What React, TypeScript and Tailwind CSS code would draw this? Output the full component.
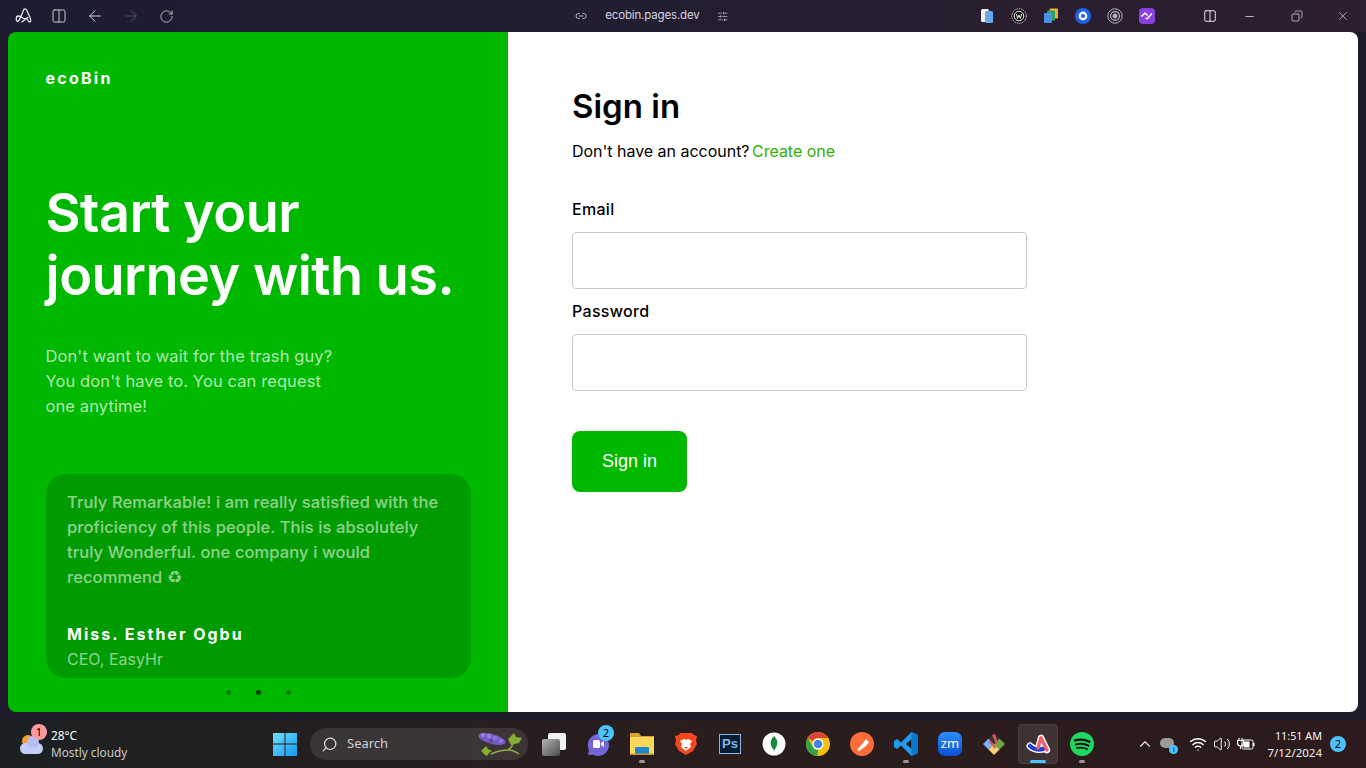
import { ArrowLeft, ArrowRight, RotateCw, Link2, SlidersHorizontal, Minus, Copy, X, Columns2, ChevronUp, Wifi, Volume2, Search } from "lucide-react";

const ArcLogo = ({ size = 18 }: { size?: number }) => (
  <svg width={size} height={size} viewBox="0 0 24 24" fill="none">
    <path d="M2 13c2-2 4-1 6 0l3 2c2 1 4 1 6-1M12 3 8 12c-1 3-2 6-4 7-3 0-3-4-1-6M12 3c2-1 3 0 4 2l4 9c1 3 2 5 0 6-2 0-3-2-4-4M9 20c2-1 3-2 5-4" stroke="#e6e6f2" strokeWidth="1.7" strokeLinecap="round" strokeLinejoin="round" />
  </svg>
);

function TopBar() {
  return (
    <div className="h-8 shrink-0 flex items-center bg-gradient-to-r from-[#1c1c30] via-[#231d30] to-[#2d1f30] text-[#d5d5e2]">
      <div className="w-[575px] shrink-0 flex items-center pl-[15px] gap-[18px]">
        <ArcLogo />
        <Columns2 size={16} strokeWidth={1.4} />
        <ArrowLeft size={18} strokeWidth={1.3} className="ml-[1px]" />
        <ArrowRight size={18} strokeWidth={1.3} className="text-[#55556a]" />
        <RotateCw size={15} strokeWidth={1.3} className="ml-[1px]" />
      </div>
      <div className="w-[153px] shrink-0 flex items-center">
        <Link2 size={14} strokeWidth={1.5} />
        <span className="ml-[18px] mr-[17px] text-[11.5px] font-['Inter',sans-serif] tracking-[-0.15px] whitespace-nowrap">ecobin.pages.dev</span>
        <SlidersHorizontal size={13} strokeWidth={1.4} />
      </div>
      <div className="flex-1 flex items-center pl-[251px] gap-4">
        <svg width="16" height="16" viewBox="0 0 16 16">
          <rect x="2" y="1" width="8" height="13" rx="1.5" fill="#f2f2f4" />
          <rect x="6" y="3" width="8" height="12" rx="1.5" fill="#6aa8ee" />
        </svg>
        <svg width="16" height="16" viewBox="0 0 16 16">
          <circle cx="8" cy="8" r="7.2" fill="#0c0c0c" stroke="#f0f0f0" strokeDasharray="1.4 1" />
          <circle cx="8" cy="8" r="4.8" fill="none" stroke="#f0f0f0" />
          <path d="M5.4 6l1.2 4.4L8 7l1.4 3.4L10.6 6" fill="none" stroke="#f0f0f0" strokeWidth="1" />
        </svg>
        <svg width="16" height="16" viewBox="0 0 16 16">
          <rect x="6.5" y="0.5" width="8.5" height="10" rx="1" fill="#edb22c" />
          <rect x="4" y="2.5" width="8" height="10" rx="1" fill="#2da06a" />
          <rect x="1" y="5" width="8" height="10" rx="1" fill="#4d8fe0" />
        </svg>
        <svg width="16" height="16" viewBox="0 0 16 16">
          <circle cx="8" cy="8" r="8" fill="#1e62e6" />
          <circle cx="8" cy="8" r="4.4" fill="#f4f6ff" />
          <circle cx="8" cy="8" r="2" fill="#1e62e6" />
        </svg>
        <svg width="16" height="16" viewBox="0 0 16 16" fill="none" stroke="#b8b8bc">
          <circle cx="8" cy="8" r="7.2" />
          <circle cx="8" cy="8" r="4.4" strokeWidth="1.2" />
          <circle cx="8" cy="8" r="2" fill="#b8b8bc" />
        </svg>
        <svg width="16" height="16" viewBox="0 0 16 16">
          <rect width="16" height="16" rx="4" fill="#8b3fe0" />
          <path d="M2.500 8.500 6 5l2.500 2.500M6.500 10.500l2 0 4.500-5" fill="none" stroke="#fff" strokeWidth="1.500" />
        </svg>
      </div>
      <div className="flex items-center pr-[16px]">
        <Columns2 size={14} strokeWidth={1.5} className="text-white" />
        <Minus size={13} strokeWidth={1.5} className="ml-[26px]" />
        <Copy size={12} strokeWidth={1.5} className="-scale-x-100 ml-[35px]" />
        <X size={14} strokeWidth={1.2} className="ml-[33px]" />
      </div>
    </div>
  );
}

function LeftPanel() {
  return (
    <div className="w-[500px] shrink-0 bg-[#00b800] pl-[38px] pr-[37px] flex flex-col font-['Inter',sans-serif] text-white">
      <div className="pt-[36px] text-[16px] leading-5 font-bold tracking-[0.14em] -ml-[0.5px]">ecoBin</div>
      <h1 className="mt-[93px] text-[54px] leading-[63px] font-semibold tracking-[-0.5px] whitespace-nowrap -ml-[0.5px]">
        Start your
        <br />
        journey with us.
      </h1>
      <p className="mt-[37px] text-[16.5px] leading-[25px] text-white/70 tracking-[0.1px] -ml-[0.5px]">
        Don't want to wait for the trash guy?
        <br />
        You don't have to. You can request
        <br />
        one anytime!
      </p>
      <div className="mt-[55px] h-[204px] shrink-0 rounded-[20px] bg-[#009b00] px-[21px] pt-[16px]">
        <p className="text-[16.5px] leading-[25px] text-white/55 font-medium tracking-[0.1px] whitespace-nowrap">
          Truly Remarkable! i am really satisfied with the
          <br />
          proficiency of this people. This is absolutely
          <br />
          truly Wonderful. one company i would
          <br />
          recommend ♻
        </p>
        <div className="mt-[32px] text-[16px] leading-[25px] font-bold tracking-[2px]">Miss. Esther Ogbu</div>
        <div className="text-[16px] leading-[25px] text-white/55">CEO, EasyHr</div>
      </div>
      <div className="mt-[12px] flex justify-center gap-[25px] pr-[1px]">
        <span className="w-[5px] h-[5px] rounded-full bg-[#007d00]" />
        <span className="w-[5px] h-[5px] rounded-full bg-[#013a01]" />
        <span className="w-[5px] h-[5px] rounded-full bg-[#007d00]" />
      </div>
    </div>
  );
}

function RightPanel() {
  return (
    <div className="flex-1 bg-white pl-[64px] pt-[52px] font-['Inter',sans-serif] text-black">
      <h2 className="text-[33px] leading-[44px] font-semibold">Sign in</h2>
      <p className="mt-[11px] text-[16px] leading-6 tracking-[-0.02px]">
        Don't have an account? <span className="text-[#2fb000] -ml-[2px]">Create one</span>
      </p>
      <form className="mt-[34px] w-[455px]">
        <label className="block text-[16px] leading-6 font-medium tracking-[0.3px]">Email</label>
        <input className="block mt-[11px] w-full h-[57px] rounded border border-[#c9c9c9] bg-white" />
        <label className="block mt-[10px] text-[16px] leading-6 font-medium tracking-[0.3px]">Password</label>
        <input type="password" className="block mt-[11px] w-full h-[57px] rounded border border-[#c9c9c9] bg-white" />
        <button type="button" className="mt-[40px] w-[115px] h-[61px] rounded-lg bg-[#00b800] text-white text-[18px] font-['Liberation_Sans',sans-serif]">
          Sign in
        </button>
      </form>
    </div>
  );
}

const Dot = () => <span className="absolute bottom-[1px] left-1/2 -translate-x-1/2 w-[6px] h-[3px] rounded-full bg-[#9a9a9a]" />;

function TaskIcons() {
  return (
    <div className="flex items-center ml-[4px]">
      <div className="w-11 h-10 flex items-center justify-center">
        <svg width="24" height="24" viewBox="0 0 24 24">
          <defs>
            <linearGradient id="tv" x1="0" y1="0" x2="1" y2="1">
              <stop offset="0" stopColor="#b5b5b5" />
              <stop offset="1" stopColor="#4a4a4a" />
            </linearGradient>
          </defs>
          <rect x="6" y="1" width="18" height="17" rx="2" fill="#f2f2f2" />
          <rect x="0" y="7" width="18" height="17" rx="2" fill="url(#tv)" />
        </svg>
      </div>
      <div className="w-11 h-10 flex items-center justify-center relative">
        <svg width="24" height="24" viewBox="0 0 24 24">
          <path d="M12 2a11 11 0 1 1-5 20.800L2 23l1-5A11 11 0 0 1 12 2z" fill="#7466d8" />
          <rect x="7" y="8" width="7" height="8" rx="1.500" fill="#fff" />
          <path d="M15 11l3-2v6l-3-2z" fill="#fff" />
        </svg>
        <span className="absolute top-[1px] left-[22px] w-4 h-4 rounded-full bg-[#4cc2ff] text-[11px] leading-4 text-black text-center font-['Noto_Sans',sans-serif]">2</span>
      </div>
      <div className="w-11 h-10 flex items-center justify-center relative">
        <svg width="24" height="24" viewBox="0 0 24 24">
          <path d="M0 1h9l2 3h13v18H0z" fill="#d9a323" />
          <rect x="0" y="5" width="24" height="17" fill="#fbd85b" />
          <rect x="5" y="15" width="14" height="7" rx="1" fill="#1f86d0" />
          <rect x="0" y="21.500" width="24" height="1.500" fill="#c8951e" />
        </svg>
        <Dot />
      </div>
      <div className="w-11 h-10 flex items-center justify-center">
        <svg width="22" height="24" viewBox="0 0 22 24">
          <path d="M5 1h12l2 2 3 1-1 5 1 3-4 7-7 4-7-4-4-7 1-3-1-5 4-1z" fill="#f1481e" />
          <path d="M5 9l4-2 2 1 2-1 4 2-2 3 1 3-5 4-5-4 1-3z" fill="#fff" />
          <path d="M9 15h4l-2 2z" fill="#f1481e" />
        </svg>
      </div>
      <div className="w-11 h-10 flex items-center justify-center">
        <div className="w-[22px] h-[20px] bg-[#001d34] border-[1.5px] border-[#8cb4e8] text-[#8cb4e8] text-[13px] leading-[17px] text-center font-bold font-['Liberation_Sans',sans-serif]">Ps</div>
      </div>
      <div className="w-11 h-10 flex items-center justify-center">
        <svg width="24" height="24" viewBox="0 0 24 24">
          <circle cx="12" cy="12" r="11.500" fill="#fff" />
          <path d="M12 4c3 3 4 6 3 9-.5 2-2 3.500-2.500 4.500L12 20l-.5-2.500C10.500 16.500 9.500 15 9 13c-1-3 0-6 3-9z" fill="#128b3f" />
        </svg>
      </div>
      <div className="w-11 h-10 flex items-center justify-center">
        <svg width="24" height="24" viewBox="0 0 24 24">
          <circle cx="12" cy="12" r="12" fill="#f3c014" />
          <path d="M1.700 6A12 12 0 0 1 22.400 6H12a6 6 0 0 0-5.200 3z" fill="#db4437" />
          <path d="M1.700 6l5.200 9a6 6 0 0 0 5.200 3l-.9 6A12 12 0 0 1 1.700 6z" fill="#2da44e" />
          <circle cx="12" cy="12" r="5.500" fill="#fff" />
          <circle cx="12" cy="12" r="4.300" fill="#3f83ec" />
        </svg>
      </div>
      <div className="w-11 h-10 flex items-center justify-center">
        <svg width="24" height="24" viewBox="0 0 24 24">
          <circle cx="12" cy="12" r="12" fill="#ff6c37" />
          <path d="M7 18l6-7 3 3-7 5zM13 11l3-4 3 3-3 4z" fill="#fff" />
        </svg>
      </div>
      <div className="w-11 h-10 flex items-center justify-center relative">
        <svg width="24" height="24" viewBox="0 0 24 24">
          <path d="M17.500 0 24 3v18l-6.500 3L7 13.500 3 17l-3-2V9l3-2 4 3.500z" fill="#1f9cf0" />
          <path d="M17.500 7 12 12l5.500 5z" fill="#241a1c" />
          <path d="M17.500 0 24 3v18l-6.500 3V17V7z" fill="#0b78d0" />
        </svg>
        <Dot />
      </div>
      <div className="w-11 h-10 flex items-center justify-center">
        <div className="w-6 h-6 rounded-[7px] bg-gradient-to-b from-[#2d8cff] to-[#0b4fd6] text-white text-[13px] leading-[22px] text-center font-['Noto_Sans',sans-serif]">zm</div>
      </div>
      <div className="w-11 h-10 flex items-center justify-center">
        <svg width="24" height="24" viewBox="0 0 24 24">
          <path d="M1 12l5.500-5.500L12 12l-5.500 5.500z" fill="#7bb0f5" />
          <path d="M12 12l5.500-5.500L23 12l-5.500 5.500z" fill="#6ba644" />
          <path d="M6.500 17.500 12 12l5.500 5.500L12 23z" fill="#f2d472" />
          <path d="M6.500 6.500 12 1l5.500 5.500L12 12z" fill="#3a3230" />
          <path d="M10 3l3-1 3 9-2 1zM8 8l6 7-1 2-6-7z" fill="#d8505a" />
        </svg>
      </div>
      <div className="w-10 h-10 flex items-center justify-center relative rounded bg-white/10 mx-[2px] border border-white/5">
        <svg width="26" height="24" viewBox="0 0 26 24" fill="none" strokeLinecap="round" strokeLinejoin="round">
          <path d="M5 14c3 3 8 4 14 3" stroke="#fff" strokeWidth="7" />
          <path d="M16 6 13 17M16 6l6 12" stroke="#fff" strokeWidth="6.500" />
          <path d="M5 14c3 3 8 4 13 3" stroke="#2040d8" strokeWidth="4.500" />
          <path d="M16 6 13 16" stroke="#f0606c" strokeWidth="3.500" />
          <path d="M16 6l6 12" stroke="#f0606c" strokeWidth="3.500" />
        </svg>
        <span className="absolute bottom-0 left-1/2 -translate-x-1/2 w-4 h-[3px] rounded-full bg-[#4cc2ff]" />
      </div>
      <div className="w-11 h-10 flex items-center justify-center relative">
        <svg width="24" height="24" viewBox="0 0 24 24" fill="none" stroke="#111" strokeLinecap="round">
          <circle cx="12" cy="12" r="12" fill="#1ed760" stroke="none" />
          <path d="M5 8.500c5-1.500 10-1 14.500 1.300" strokeWidth="2.400" />
          <path d="M6 12.500c4.500-1.200 8.500-.8 12.500 1.200" strokeWidth="2" />
          <path d="M7 16c3.500-.8 7-.5 10 1" strokeWidth="1.700" />
        </svg>
        <Dot />
      </div>
    </div>
  );
}

function Taskbar() {
  return (
    <div className="h-12 mt-2 shrink-0 flex items-center bg-gradient-to-r from-[#1c2022] via-[#2a1d1e] to-[#2c1a1c] text-white font-['Noto_Sans',sans-serif]">
      <div className="w-[273px] shrink-0 flex items-center pl-[20px]">
        <div className="relative w-[24px] h-[24px]">
          <svg width="24" height="24" viewBox="0 0 24 24">
            <circle cx="8" cy="9" r="6" fill="#f5a033" />
            <rect x="0" y="11" width="23" height="11" rx="5.500" fill="#c3cdfa" />
            <circle cx="13" cy="10" r="6" fill="#b4c0f6" />
          </svg>
          <span className="absolute -top-[8px] left-[11px] w-[16px] h-[16px] rounded-full bg-[#ff9aa2] text-[11px] leading-4 text-black text-center">1</span>
        </div>
        <div className="ml-[7px] text-[11.8px] leading-[17px]">
          <div>28°C</div>
          <div className="text-[#c9c9c9]">Mostly cloudy</div>
        </div>
      </div>
      <svg width="24" height="24" viewBox="0 0 24 24">
        <defs>
          <linearGradient id="win" x1="0" y1="0" x2="1" y2="1">
            <stop offset="0" stopColor="#6fe0f8" />
            <stop offset="1" stopColor="#1597f5" />
          </linearGradient>
        </defs>
        <path d="M0 1h11.500v10.500H0zM12.500 1H24v10.500H12.500zM0 12.500h11.500V24H0zM12.500 12.500H24V24H12.500z" fill="url(#win)" />
      </svg>
      <div className="ml-[13px] w-[218px] h-8 rounded-full bg-white/10 flex items-center pl-[11px] relative">
        <Search size={17} strokeWidth={1.6} className="-scale-x-100 text-[#e6e6e6]" />
        <span className="ml-[9px] text-[13px] text-[#d2d2d2]">Search</span>
        <svg width="46" height="26" viewBox="0 0 46 26" className="absolute right-[4px] top-[3px]">
          <path d="M13 23c6-3 12-4 18-4 4 0 7 2 10 4M30 19c3-2 5-5 6-9" stroke="#8fb043" strokeWidth="1.500" fill="none" />
          <path d="M30 8l6-6 2 4 6 1-3 5-5 1-3 1zM3 20l5-5 2 3 4 2-3 2-2 3-3-2z" fill="#86ae35" />
          <ellipse cx="14" cy="8" rx="14" ry="5" transform="rotate(15 14 8)" fill="#7559c4" />
          <circle cx="5" cy="4" r="2" fill="#9a80e0" />
          <circle cx="11" cy="5" r="2.200" fill="#9a80e0" />
          <circle cx="17" cy="7" r="2.200" fill="#8f74d8" />
          <circle cx="23" cy="10" r="2.200" fill="#8f74d8" />
          <circle cx="13" cy="10" r="2" fill="#5f46ad" />
        </svg>
      </div>
      <TaskIcons />
      <div className="flex-1 flex items-center justify-end pr-[20px]">
        <ChevronUp size={18} strokeWidth={1.5} className="mr-[6px] text-[#e8e8e8]" />
        <div className="relative w-[16px] h-[12px] mr-[13px]">
          <div className="w-[14px] h-[10px] rounded-full bg-[#9a9a9a]" />
          <span className="absolute -right-[2px] -bottom-[4px] w-[9px] h-[9px] rounded-full bg-[#4cc2ff] text-[7px] leading-[9px] text-center text-black">i</span>
        </div>
        <Wifi size={18} strokeWidth={1.8} className="mr-[6px]" />
        <Volume2 size={18} strokeWidth={1.3} className="mr-[6px]" />
        <svg width="18" height="14" viewBox="0 0 18 14" className="mr-[12px]">
          <path d="M2 1v2M5 1v2M0.500 3.500h6v2.500a3 3 0 0 1-6 0zM3.500 9v3" fill="none" stroke="#fff" strokeWidth="1.200" />
          <rect x="5" y="3" width="11" height="9" rx="1.500" fill="none" stroke="#fff" strokeWidth="1" />
          <rect x="6.500" y="4.500" width="6" height="6" fill="#fff" />
          <rect x="16" y="6" width="1.500" height="3" fill="#fff" />
        </svg>
        <div className="text-right text-[11.5px] leading-[17px] text-[#f2f2f2]">
          <div className="text-[10.8px]">11:51 AM</div>
          <div>7/12/2024</div>
        </div>
        <span className="ml-[8px] w-4 h-4 rounded-full bg-[#4cc2ff] text-[11px] leading-4 text-black text-center">2</span>
      </div>
    </div>
  );
}

export default function App() {
  return (
    <div className="w-full h-screen overflow-hidden flex flex-col bg-[#1e1c2a]">
      <TopBar />
      <div className="flex-1 min-h-0 mx-2 rounded-lg overflow-hidden flex">
        <LeftPanel />
        <RightPanel />
      </div>
      <Taskbar />
    </div>
  );
}
